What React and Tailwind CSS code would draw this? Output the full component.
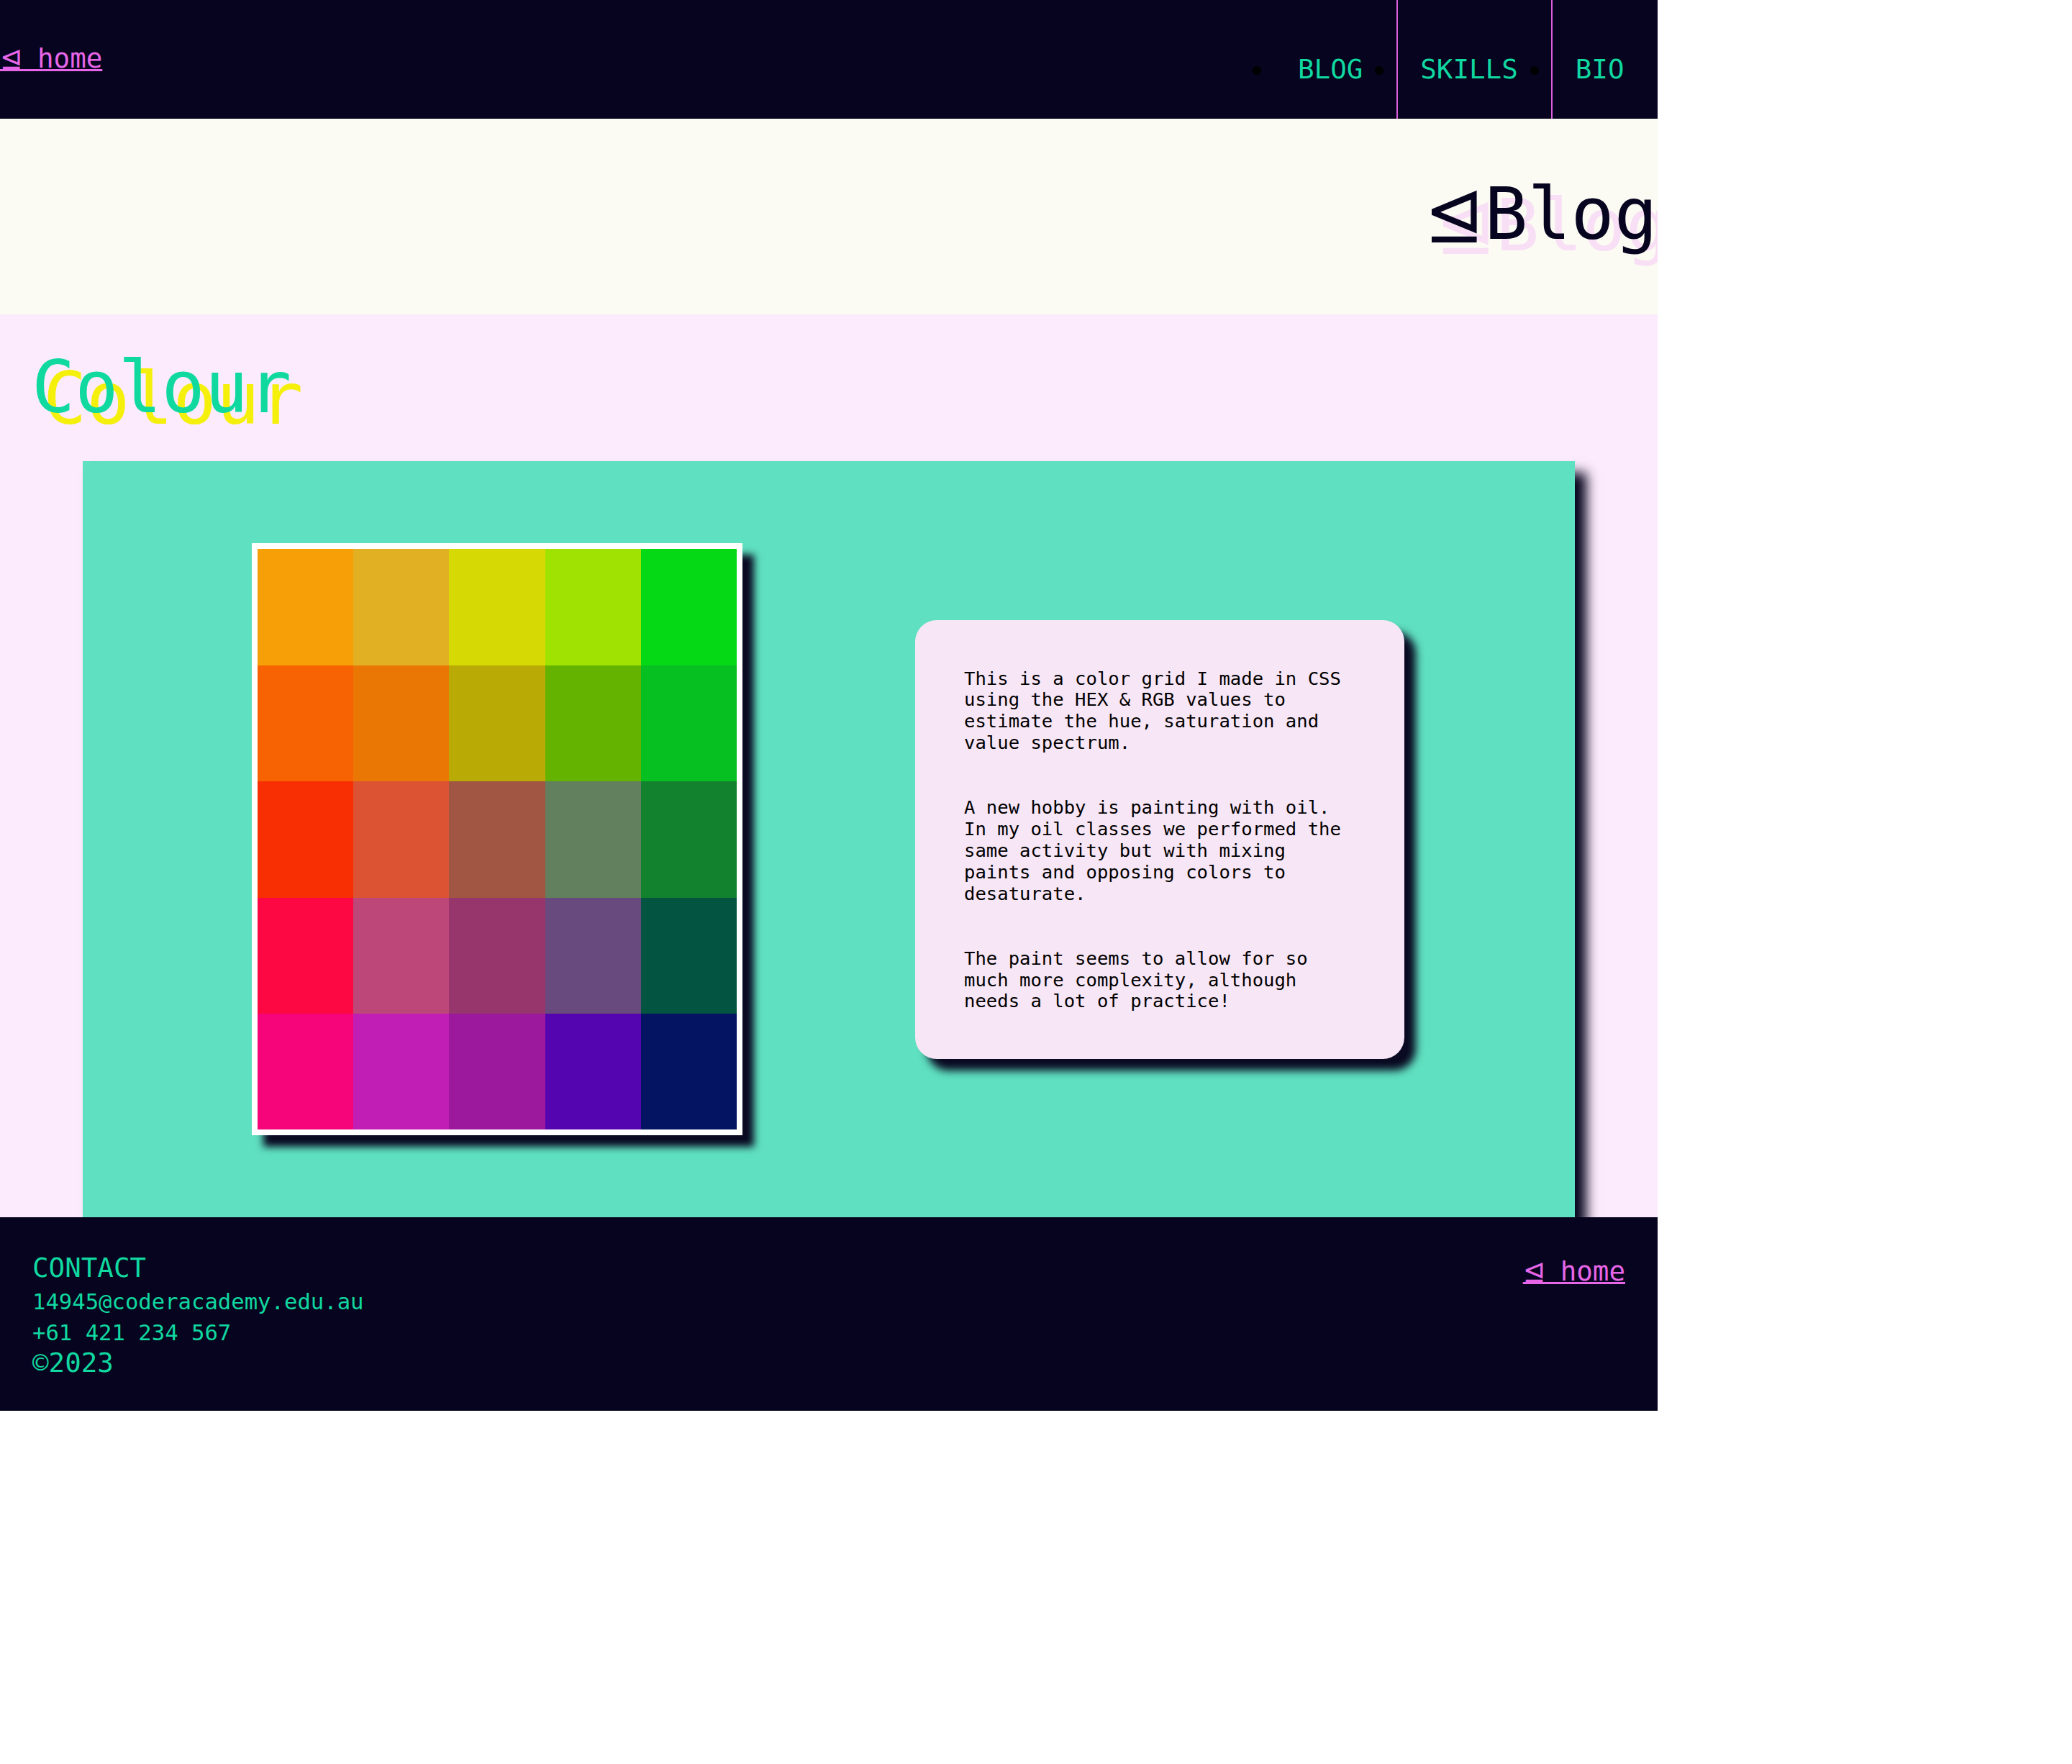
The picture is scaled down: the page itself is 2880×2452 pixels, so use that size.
import React from "react";

const cells = [
  "bg-[#f79f07]", "bg-[#e2b023]", "bg-[#d6d904]", "bg-[#a0e302]", "bg-[#05d916]",
  "bg-[#f76302]", "bg-[#ea7604]", "bg-[#b9aa06]", "bg-[#63b300]", "bg-[#06bf20]",
  "bg-[#f72f02]", "bg-[#dc5333]", "bg-[#a05642]", "bg-[#62805e]", "bg-[#13822e]",
  "bg-[#fe0843]", "bg-[#bd4779]", "bg-[#97366d]", "bg-[#694a7e]", "bg-[#035541]",
  "bg-[#f6057a]", "bg-[#c01eb5]", "bg-[#9c189d]", "bg-[#5405b0]", "bg-[#041462]",
];

const nav = [
  { label: "BLOG", border: "border-transparent" },
  { label: "SKILLS", border: "border-[#dc5fde]" },
  { label: "BIO", border: "border-[#dc5fde]" },
];

function Tri({ tight }) {
  return (
    <span className={tight ? "-mr-[2px] font-['DejaVu_Sans',sans-serif]" : "font-['DejaVu_Sans',sans-serif]"}>
      ⊴
    </span>
  );
}

export default function App() {
  return (
    <div className="w-[2304px] overflow-hidden font-['DejaVu_Sans_Mono',monospace]">
      <header className="flex h-[165px] items-start justify-between bg-[#06041e]">
        <a href="#" className="mt-[59.5px] text-[37.5px] leading-[43.65px] text-[#e766e8] underline">
          <Tri tight /> home
        </a>
        <ul className="flex h-full pr-[29.5px] text-[37.5px] leading-[43.65px] text-[#10d8a0]">
          {nav.map((item) => (
            <li key={item.label} className="flex h-full">
              <span className="mt-[92px] mr-[17.5px] h-[12px] w-[12px] rounded-full bg-black" />
              <a href="#" className={`h-full border-l-2 ${item.border} pl-[31.5px] pr-[17px] pt-[75px]`}>
                {item.label}
              </a>
            </li>
          ))}
        </ul>
      </header>

      <section className="flex h-[272px] justify-end bg-[#fbfaf3] pt-[75px]">
        <h1 className="whitespace-nowrap text-[100px] leading-[116.4px] text-[#06041e] [text-shadow:16px_16px_0_#f8dff5]">
          <Tri />Blog
        </h1>
      </section>

      <main className="bg-[#fcebfc] pt-[44px]">
        <h2 className="mb-[44px] pl-[44px] text-[100px] leading-[116.4px] text-[#0fd99f] [text-shadow:16px_16px_0_#f5ef0c]">
          Colour
        </h2>
        <div className="mx-[115px] flex items-center gap-[240px] bg-[#5fe0c0] py-[114px] pl-[235px] shadow-[16px_16px_16px_#06041e]">
          <div className="grid h-[823px] w-[682px] shrink-0 grid-cols-5 grid-rows-5 border-8 border-white shadow-[16px_16px_10px_#0a0a22]">
            {cells.map((c, i) => (
              <div key={i} className={c} />
            ))}
          </div>
          <div className="flex w-[680px] shrink-0 flex-col gap-[60.5px] rounded-[30px] bg-[#f7e6f6] px-[68px] pt-[67px] pb-[65px] text-[25.6px] leading-[29.8px] text-black shadow-[16px_16px_12px_#0a0a22]">
            <p>This is a color grid I made in CSS using the HEX &amp; RGB values to estimate the hue, saturation and value spectrum.</p>
            <p>A new hobby is painting with oil. In my oil classes we performed the same activity but with mixing paints and opposing colors to desaturate.</p>
            <p>The paint seems to allow for so much more complexity, although needs a lot of practice!</p>
          </div>
        </div>
      </main>

      <footer className="flex justify-between bg-[#06041e] px-[45px] pt-[46px] pb-[48.4px] text-[#10d8a0]">
        <div className="flex flex-col">
          <h3 className="text-[37.5px] leading-[49.4px]">CONTACT</h3>
          <p className="text-[30.6px] leading-[43.4px]">14945@coderacademy.edu.au</p>
          <p className="text-[30.6px] leading-[43.4px]">+61 421 234 567</p>
          <p className="text-[37.5px] leading-[38.4px]">©2023</p>
        </div>
        <a href="#" className="mt-[7.2px] self-start text-[37.5px] leading-[43.65px] text-[#e766e8] underline">
          <Tri tight /> home
        </a>
      </footer>
    </div>
  );
}
